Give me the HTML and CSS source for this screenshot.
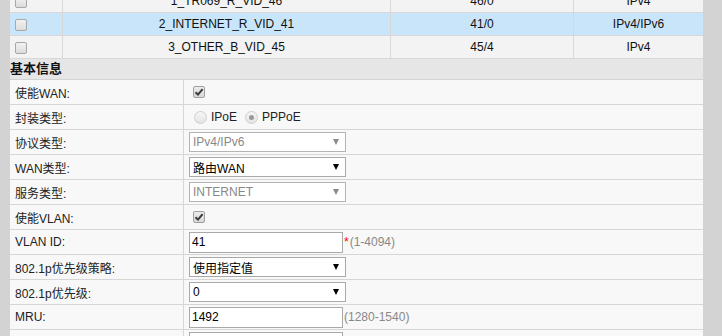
FILE: index.html
```html
<!DOCTYPE html>
<html lang="zh-CN">
<head>
    <meta charset="UTF-8">
    <meta name="viewport" content="width=device-width, initial-scale=1.0">
    <title>WAN配置</title>
    <link rel="stylesheet" href="styles.css">
</head>
<body>
    <div class="page">
        <table class="wanList">
            <tr>
                <td class="colCheck"><span class="tblCheck"></span></td>
                <td class="colName">1_TR069_R_VID_46</td>
                <td class="colVid">46/0</td>
                <td class="colProto">IPv4</td>
            </tr>
            <tr class="selected">
                <td class="colCheck"><span class="tblCheck"></span></td>
                <td class="colName">2_INTERNET_R_VID_41</td>
                <td class="colVid">41/0</td>
                <td class="colProto">IPv4/IPv6</td>
            </tr>
            <tr>
                <td class="colCheck"><span class="tblCheck"></span></td>
                <td class="colName">3_OTHER_B_VID_45</td>
                <td class="colVid">45/4</td>
                <td class="colProto">IPv4</td>
            </tr>
        </table>

        <div class="sectionTitle">基本信息</div>

        <div class="formRow">
            <div class="label">使能WAN:</div>
            <div class="value"><span class="fakeCheck"><svg width="10" height="10" viewBox="0 0 10 10"><path d="M1.5 5.2 L4 7.6 L8.6 2.2" fill="none" stroke="#3a3a3a" stroke-width="2"/></svg></span></div>
        </div>
        <div class="formRow">
            <div class="label">封装类型:</div>
            <div class="value">
                <span class="radio"></span><span class="radioText">IPoE</span>
                <span class="radio checked"></span><span class="radioText">PPPoE</span>
            </div>
        </div>
        <div class="formRow">
            <div class="label">协议类型:</div>
            <div class="value"><div class="selectBox disabled"><span>IPv4/IPv6</span><i class="arrow"></i></div></div>
        </div>
        <div class="formRow">
            <div class="label">WAN类型:</div>
            <div class="value"><div class="selectBox"><span>路由WAN</span><i class="arrow"></i></div></div>
        </div>
        <div class="formRow">
            <div class="label">服务类型:</div>
            <div class="value"><div class="selectBox disabled"><span>INTERNET</span><i class="arrow"></i></div></div>
        </div>
        <div class="formRow">
            <div class="label">使能VLAN:</div>
            <div class="value"><span class="fakeCheck"><svg width="10" height="10" viewBox="0 0 10 10"><path d="M1.5 5.2 L4 7.6 L8.6 2.2" fill="none" stroke="#3a3a3a" stroke-width="2"/></svg></span></div>
        </div>
        <div class="formRow">
            <div class="label">VLAN ID:</div>
            <div class="value"><input type="text" class="textBox" value="41"><span class="required">*</span><span class="hint">(1-4094)</span></div>
        </div>
        <div class="formRow">
            <div class="label">802.1p优先级策略:</div>
            <div class="value"><div class="selectBox"><span>使用指定值</span><i class="arrow"></i></div></div>
        </div>
        <div class="formRow">
            <div class="label">802.1p优先级:</div>
            <div class="value"><div class="selectBox"><span>0</span><i class="arrow"></i></div></div>
        </div>
        <div class="formRow">
            <div class="label">MRU:</div>
            <div class="value"><input type="text" class="textBox" value="1492"><span class="hint">(1280-1540)</span></div>
        </div>
        <div class="formRow">
            <div class="label">用户名:</div>
            <div class="value"><input type="text" class="textBox" value=""></div>
        </div>
    </div>
</body>
</html>
```

FILE: styles.css
```css
html, body {
    margin: 0;
    height: 100%;
    overflow: hidden;
}

body {
    font-family: "Liberation Sans", Arial, "Noto Sans CJK SC", sans-serif;
    font-size: 12px;
    background-color: #d3d3d3;
    color: #333;
}

.page {
    margin: -10px 19px 0 10px;
    background-color: #f8f8f8;
}

.wanList {
    width: 100%;
    border-collapse: collapse;
    table-layout: fixed;
}

.wanList td {
    height: 22px;
    padding: 0;
    border-bottom: 1px solid #d8d8d8;
    border-left: 1px solid #d8d8d8;
    background-color: #f3f3f3;
    text-align: center;
    color: #111;
}

.wanList td:first-child {
    border-left: none;
}

.wanList tr.selected td {
    background-color: #c9e5fa;
}

.colCheck { width: 52px; text-align: left !important; }
.colName { width: 327px; }
.colVid { width: 182px; }

.tblCheck {
    display: block;
    width: 10px;
    height: 10px;
    margin-left: 5px;
    margin-top: 1px;
    border: 1px solid #a8a8a8;
    border-radius: 2px;
    background: linear-gradient(#f2f2f2, #dcdcdc);
}

.sectionTitle {
    height: 20px;
    line-height: 20px;
    background-color: #e6e6e6;
    border-bottom: 1px solid #d3d3d3;
    font-size: 13px;
    font-weight: bold;
    color: #111;
}

.formRow {
    display: flex;
    height: 24px;
    border-bottom: 1px solid #d6d6d6;
}

.label {
    width: 168px;
    padding-left: 5px;
    border-right: 1px solid #d6d6d6;
    display: flex;
    align-items: center;
    color: #222;
}

.value {
    flex: 1;
    padding-left: 5px;
    display: flex;
    align-items: center;
}

.fakeCheck {
    width: 10px;
    height: 10px;
    margin-left: 4px;
    margin-top: -1px;
    border: 1px solid #a0a0a0;
    border-radius: 2px;
    background: linear-gradient(#ececec, #d8d8d8);
    display: flex;
    align-items: center;
    justify-content: center;
}

.radio {
    width: 11px;
    height: 11px;
    margin-left: 5px;
    border: 1px solid #cfcfcf;
    border-radius: 50%;
    background: linear-gradient(#f6f6f6, #e4e4e4);
    display: flex;
    align-items: center;
    justify-content: center;
}

.radio.checked::after {
    content: "";
    width: 5px;
    height: 5px;
    border-radius: 50%;
    background-color: #9a9a9a;
}

.radioText {
    margin-left: 4px;
    margin-right: 3px;
    font-size: 12px;
    color: #222;
}

.selectBox {
    width: 152px;
    height: 18px;
    border: 1px solid #a9a9a9;
    background-color: #fff;
    display: flex;
    align-items: center;
    justify-content: space-between;
    padding-left: 3px;
    box-sizing: content-box;
    color: #000;
    font-size: 12px;
}

.selectBox.disabled {
    color: #888;
    border-color: #b4b4b4;
}

.arrow {
    width: 0;
    height: 0;
    margin-right: 6px;
    border-left: 3.5px solid transparent;
    border-right: 3.5px solid transparent;
    border-top: 6px solid #000;
}

.selectBox.disabled .arrow {
    border-top-color: #8a8a8a;
}

.textBox {
    width: 148px;
    height: 19px;
    margin: 0;
    padding: 0 2px;
    border: 1px solid #a9a9a9;
    font-family: "Liberation Sans", Arial, sans-serif;
    font-size: 12px;
    color: #000;
    box-sizing: content-box;
    outline: none;
}

.required {
    color: #f00;
    margin-left: 1px;
    font-size: 12px;
}

.hint {
    color: #888;
    font-size: 12px;
    margin-left: 1px;
}
```
